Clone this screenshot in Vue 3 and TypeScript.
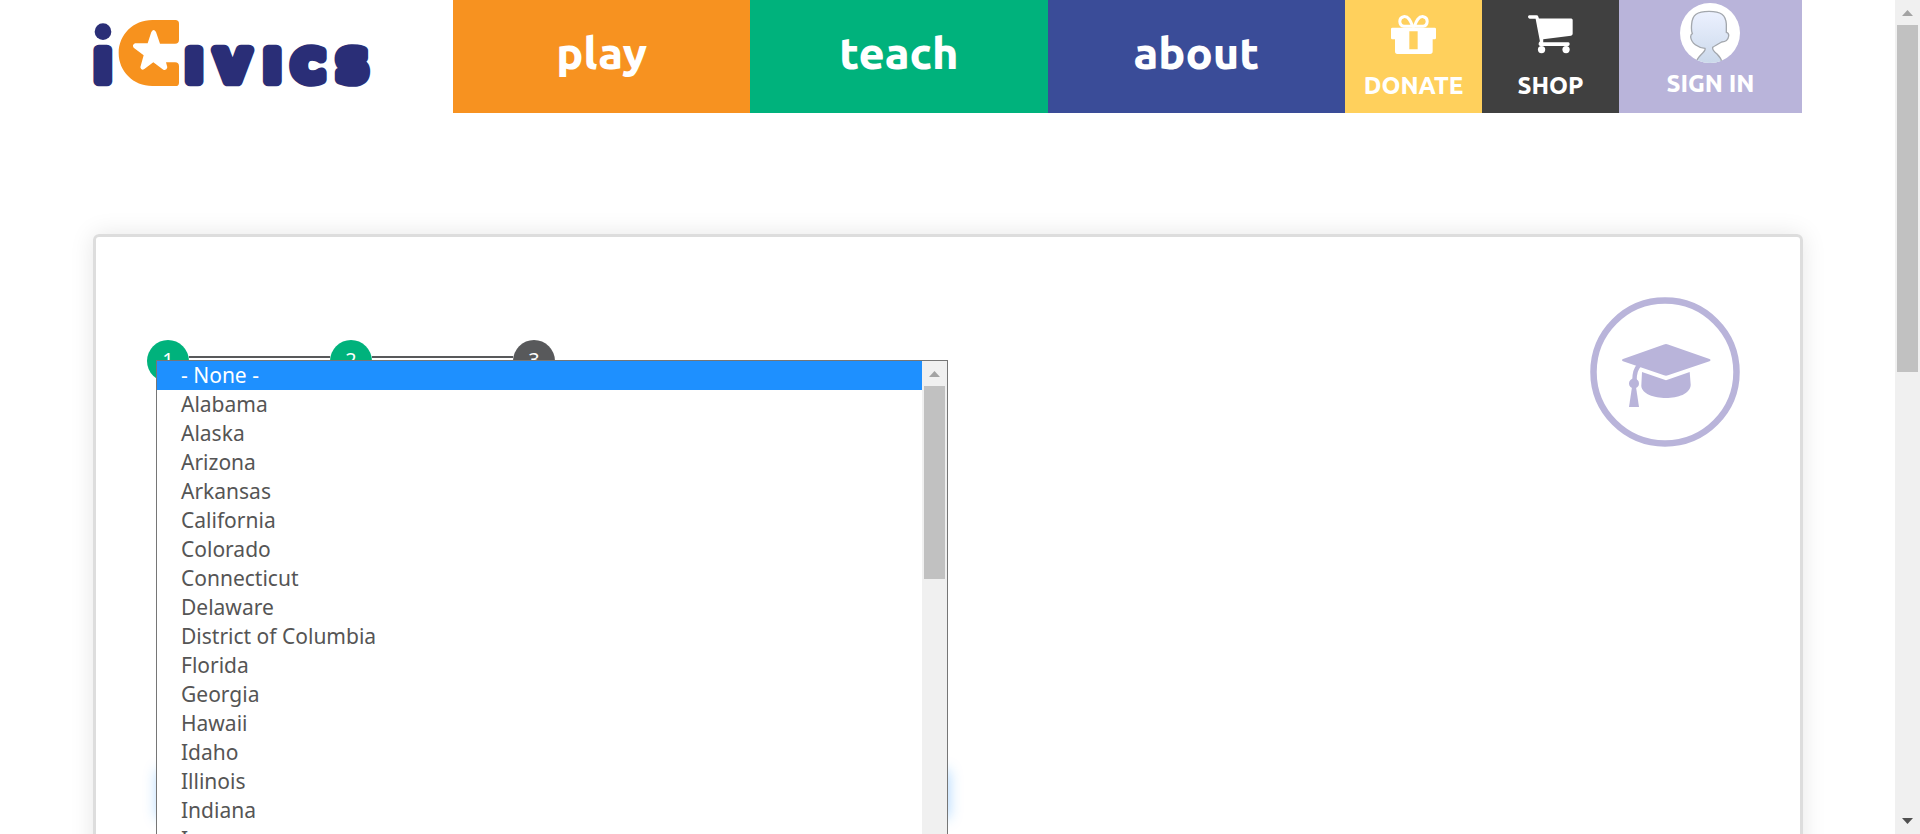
<script setup lang="ts">
import { ref } from 'vue'

interface Step {
  label: string
  done: boolean
}

const mainLinks = ['play', 'teach', 'about']

const steps: Step[] = [
  { label: '1', done: true },
  { label: '2', done: true },
  { label: '3', done: false },
]

const states: string[] = [
  '- None -', 'Alabama', 'Alaska', 'Arizona', 'Arkansas', 'California', 'Colorado',
  'Connecticut', 'Delaware', 'District of Columbia', 'Florida', 'Georgia', 'Hawaii',
  'Idaho', 'Illinois', 'Indiana', 'Iowa', 'Kansas', 'Kentucky', 'Louisiana',
]

const selected = ref(states[0])
</script>

<template>
  <div class="window">
    <div class="page">
      <header class="header">
        <a class="logo" href="#" aria-label="iCivics">
          <svg width="281" height="66" viewBox="39 60 843 198">
            <circle cx="69" cy="95" r="25" fill="#2a2e77" />
            <text class="word" x="44" y="242">I</text>
            <path fill="#f7921e" d="M217 60H286Q297 60 297 71V119Q297 131 285 131H240L228 96Q221 84 214 96L203 130H165Q155 135 161 143L191 166L181 202Q183 212 192 208L220 187L250 209Q260 212 262 202L258 187H285Q297 187 297 199V248Q297 258 287 258H217C160 258 116 214 116 159S160 60 217 60Z" />
            <text class="word" x="318 407 553 637 770" y="242">IVICS</text>
          </svg>
        </a>
        <nav class="nav">
          <a v-for="link in mainLinks" :key="link" href="#" class="main-link" :class="link">{{ link }}</a>
          <a href="#" class="tile donate">
            <svg width="45" height="39" viewBox="153 45 135 117">
              <g fill="none" stroke="#fff" stroke-width="9">
                <path d="M218 79H192C176 77 175 53 191 50C206 48 212 64 218 79Z" />
                <path d="M223 79H249C265 77 266 53 250 50C235 48 229 64 223 79Z" />
              </g>
              <path fill="#fff" fill-rule="evenodd" d="M157 83H284Q288 83 288 87V114Q288 118 284 118H278V154Q278 162 270 162H172Q165 162 165 154V118H157Q153 118 153 114V87Q153 83 157 83ZM208 94V148H233V94Z" />
            </svg>
            <span>DONATE</span>
          </a>
          <a href="#" class="tile shop">
            <svg width="45" height="39" viewBox="564 45 136 117">
              <path fill="#fff" d="M568 45H590Q594 45 595 49L597 55H695Q699 55 699 60V101Q699 106 694 107L610 118V127H686Q690 128 690 132T686 138H600Q594 136 597 128L600 124L587 56H569Q564 55 564 50T568 45Z" />
              <circle cx="605" cy="149" r="11" fill="#fff" />
              <circle cx="679" cy="149" r="11" fill="#fff" />
            </svg>
            <span>SHOP</span>
          </a>
          <a href="#" class="tile signin">
            <svg width="60" height="60" viewBox="243 9 180 180">
              <defs>
                <linearGradient id="skin" x1="0" y1="0" x2="0" y2="1">
                  <stop offset="0" stop-color="#ecf1ff" />
                  <stop offset="1" stop-color="#cad8ea" />
                </linearGradient>
                <clipPath id="round"><circle cx="333" cy="99" r="90" /></clipPath>
              </defs>
              <circle cx="333" cy="99" r="90" fill="#fff" />
              <path clip-path="url(#round)" fill="url(#skin)" stroke="#a3a7ad" stroke-width="4" d="M292 194Q291 178 306 164Q321 150 318 145C296 142 277 130 275 111Q275 103 280 101Q276 91 278 72C280 44 294 34 330 34C366 34 380 44 382 72L382 97Q390 99 389 108Q387 125 368 126Q348 137 341 142Q339 150 354 162Q370 178 370 194Z" />
            </svg>
            <span>SIGN IN</span>
          </a>
        </nav>
      </header>

      <main class="card">
        <form class="form" @submit.prevent>
          <ol class="steps">
            <li v-for="step in steps" :key="step.label" class="step" :class="{ done: step.done }">
              <span class="dot">{{ step.label }}</span>
            </li>
          </ol>
          <div class="field">
            <div class="popup">
              <select v-model="selected" class="options" size="20" aria-label="State">
                <option v-for="state in states" :key="state" :value="state">{{ state }}</option>
              </select>
              <div class="scrollbar" aria-hidden="true">
                <svg class="arrow" width="11" height="6" viewBox="0 0 11 6"><path fill="#a3a3a3" d="M5.500 0L11 6H0Z" /></svg>
                <div class="thumb list-thumb"></div>
              </div>
            </div>
          </div>
        </form>
        <svg class="badge" width="150" height="150" viewBox="0 0 150 150">
          <circle cx="75" cy="75" r="71.500" fill="none" stroke="#b9b4da" stroke-width="6.500" />
          <g fill="#b9b4da">
            <path d="M33 62L74 47.500Q76 46.700 78 47.500L119.500 62Q121.500 63 119.500 64.300L78 78.300Q76 79 74 78.300L33 64.300Q31 63 33 62Z" />
            <path d="M52 75L76 83.300L99.700 75L100.700 88C100 97 88 101 76 101S52 97 51.300 89Z" />
            <circle cx="44" cy="86.500" r="5" />
            <path d="M42 90H46L49 110H39Z" />
          </g>
          <path d="M49 68.500Q44.500 73 44.500 83" fill="none" stroke="#b9b4da" stroke-width="4.500" />
        </svg>
      </main>
    </div>

    <div class="scrollbar" aria-hidden="true">
      <svg class="arrow" width="11" height="6" viewBox="0 0 11 6"><path fill="#a3a3a3" d="M5.500 0L11 6H0Z" /></svg>
      <div class="thumb page-thumb"></div>
      <svg class="arrow down" width="11" height="6" viewBox="0 0 11 6"><path fill="#505050" d="M5.500 6L11 0H0Z" /></svg>
    </div>
  </div>
</template>

<style>
body {
  margin: 0;
  background: #fff;
}
</style>

<style scoped>
.window {
  display: flex;
  height: 100vh;
  overflow: hidden;
  font-family: "Noto Sans", "Open Sans", sans-serif;
}
.page {
  flex: 1;
  min-width: 0;
  padding: 0 92px 0 93px;
  overflow: hidden;
}
.header {
  display: flex;
  height: 113px;
  padding-right: 1px;
}
.logo {
  flex: 0 0 360px;
  padding-top: 20px;
}
.logo svg {
  display: block;
  overflow: visible;
}
.word {
  fill: #2a2e77;
  stroke: #2a2e77;
  stroke-width: 32px;
  stroke-linejoin: round;
  font-family: "DejaVu Sans", sans-serif;
  font-size: 130px;
  font-weight: 700;
}
.nav {
  display: flex;
  flex: 1;
  font-family: Ubuntu, Lato, sans-serif;
  font-weight: 800;
}
.nav a {
  color: #fff;
  text-decoration: none;
}
.main-link {
  display: flex;
  flex: 1;
  align-items: center;
  justify-content: center;
  padding-bottom: 8px;
  font-size: 45px;
  line-height: 56px;
}
.play { background: #f79220; }
.teach { background: #00b27c; }
.about { background: #3a4c98; }
.tile {
  display: flex;
  flex: 0 0 137px;
  flex-direction: column;
  align-items: center;
  gap: 17px;
  box-sizing: border-box;
  padding-top: 15px;
  font-size: 24px;
  line-height: 30px;
}
.donate { background: #ffd05c; }
.shop { background: #404040; }
.signin {
  flex-basis: 183px;
  gap: 6px;
  padding-top: 3px;
  background: #b9b4da;
}
.card {
  display: grid;
  grid-template-columns: 1fr 1fr;
  align-items: start;
  min-height: 900px;
  margin-top: 121px;
  padding: 60px 51px;
  border: 3px solid #ddd;
  border-radius: 6px;
  box-shadow: 0 0 25px rgba(0, 0, 0, 0.1);
}
.steps {
  display: flex;
  margin: 43px 0 0;
  padding: 0;
  list-style: none;
}
.step {
  display: flex;
  width: 183px;
}
.step::after {
  flex: 1;
  height: 2px;
  margin-top: 16px;
  background: #58595b;
  content: "";
}
.step:last-child::after {
  display: none;
}
.dot {
  width: 42px;
  height: 42px;
  border-radius: 50%;
  background: #58595b;
  color: #fff;
  font-size: 20px;
  line-height: 40px;
  text-align: center;
}
.done .dot {
  background: #00b27c;
}
.field {
  position: relative;
  height: 48px;
  margin: 388px 0 0 9px;
  border-radius: 4px;
  box-shadow: 1px 0 14px rgba(30, 144, 255, 0.35);
}
.popup {
  position: absolute;
  top: -410px;
  right: 0;
  left: 0;
  display: flex;
  border: 1px solid #767676;
  background: #fff;
}
.options {
  flex: 1;
  min-width: 0;
  margin: 0;
  padding: 0;
  border: 0;
  border-radius: 0;
  outline: 0;
  background: #fff;
  color: #555;
  font-family: "Noto Sans", sans-serif;
  font-size: 21px;
  scrollbar-width: none;
}
.options option {
  height: 29px;
  min-height: 29px;
  box-sizing: border-box;
  padding: 0 24px;
  line-height: 29px;
}
.options option:checked {
  background: linear-gradient(#1e90ff, #1e90ff);
  -webkit-text-fill-color: #fff;
}
.scrollbar {
  display: flex;
  flex: 0 0 25px;
  flex-direction: column;
  align-items: center;
  background: #f0f0f0;
}
.arrow {
  display: block;
  flex: none;
  margin: 10px 0 9px;
}
.thumb {
  flex: none;
  width: 21px;
  background: #c1c1c1;
}
.list-thumb {
  height: 193px;
}
.page-thumb {
  height: 347px;
}
.down {
  margin-top: auto;
  margin-bottom: 10px;
}
.badge {
  justify-self: end;
  margin-right: 9px;
}
</style>
